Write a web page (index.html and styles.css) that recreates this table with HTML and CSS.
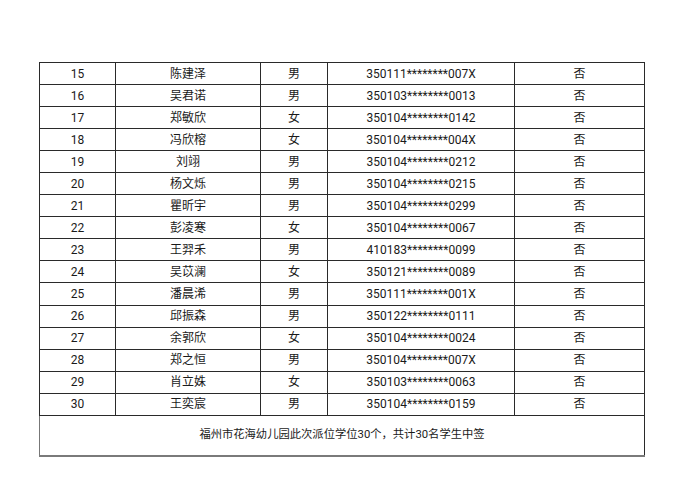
FILE: index.html
```html
<!DOCTYPE html>
<html lang="zh">
<head>
<meta charset="utf-8">
<link rel="stylesheet" href="styles.css">
</head>
<body>
<div class="page">
<table class="list">
<colgroup>
<col class="c1"><col class="c2"><col class="c3"><col class="c4"><col class="c5">
</colgroup>
<tbody>
<tr><td>15</td><td>陈建泽</td><td>男</td><td>350111********007X</td><td>否</td></tr>
<tr><td>16</td><td>吴君诺</td><td>男</td><td>350103********0013</td><td>否</td></tr>
<tr><td>17</td><td>郑敏欣</td><td>女</td><td>350104********0142</td><td>否</td></tr>
<tr><td>18</td><td>冯欣榕</td><td>女</td><td>350104********004X</td><td>否</td></tr>
<tr><td>19</td><td>刘翊</td><td>男</td><td>350104********0212</td><td>否</td></tr>
<tr><td>20</td><td>杨文烁</td><td>男</td><td>350104********0215</td><td>否</td></tr>
<tr><td>21</td><td>瞿昕宇</td><td>男</td><td>350104********0299</td><td>否</td></tr>
<tr><td>22</td><td>彭凌寒</td><td>女</td><td>350104********0067</td><td>否</td></tr>
<tr><td>23</td><td>王羿禾</td><td>男</td><td>410183********0099</td><td>否</td></tr>
<tr><td>24</td><td>吴苡澜</td><td>女</td><td>350121********0089</td><td>否</td></tr>
<tr><td>25</td><td>潘晨浠</td><td>男</td><td>350111********001X</td><td>否</td></tr>
<tr><td>26</td><td>邱振森</td><td>男</td><td>350122********0111</td><td>否</td></tr>
<tr><td>27</td><td>余郭欣</td><td>女</td><td>350104********0024</td><td>否</td></tr>
<tr><td>28</td><td>郑之恒</td><td>男</td><td>350104********007X</td><td>否</td></tr>
<tr><td>29</td><td>肖立姝</td><td>女</td><td>350103********0063</td><td>否</td></tr>
<tr><td>30</td><td>王奕宸</td><td>男</td><td>350104********0159</td><td>否</td></tr>
<tr class="foot"><td colspan="5">福州市花海幼儿园此次派位学位30个，共计30名学生中签</td></tr>
</tbody>
</table>
</div>
</body>
</html>
```

FILE: styles.css
```css
html, body {
  margin: 0;
  padding: 0;
  background: #ffffff;
}
.page {
  padding: 62px 0 0 39px;
}
.list {
  border-collapse: collapse;
  table-layout: fixed;
  width: 605px;
  font-family: Roboto, "Noto Sans CJK SC", sans-serif;
  font-size: 12px;
  color: #1a1a1a;
}
.c1 { width: 76px; }
.c2 { width: 145px; }
.c3 { width: 67px; }
.c4 { width: 187px; }
.c5 { width: 130px; }
.list td {
  border: 1px solid #2a2a2a;
  height: 21.05px;
  padding: 0;
  text-align: center;
  vertical-align: middle;
  line-height: 14px;
}
.list tr.foot td {
  height: 39px;
  font-size: 11.3px;
  border-left-color: #777;
  border-bottom: 2px solid #7a7a7a;
}
```
